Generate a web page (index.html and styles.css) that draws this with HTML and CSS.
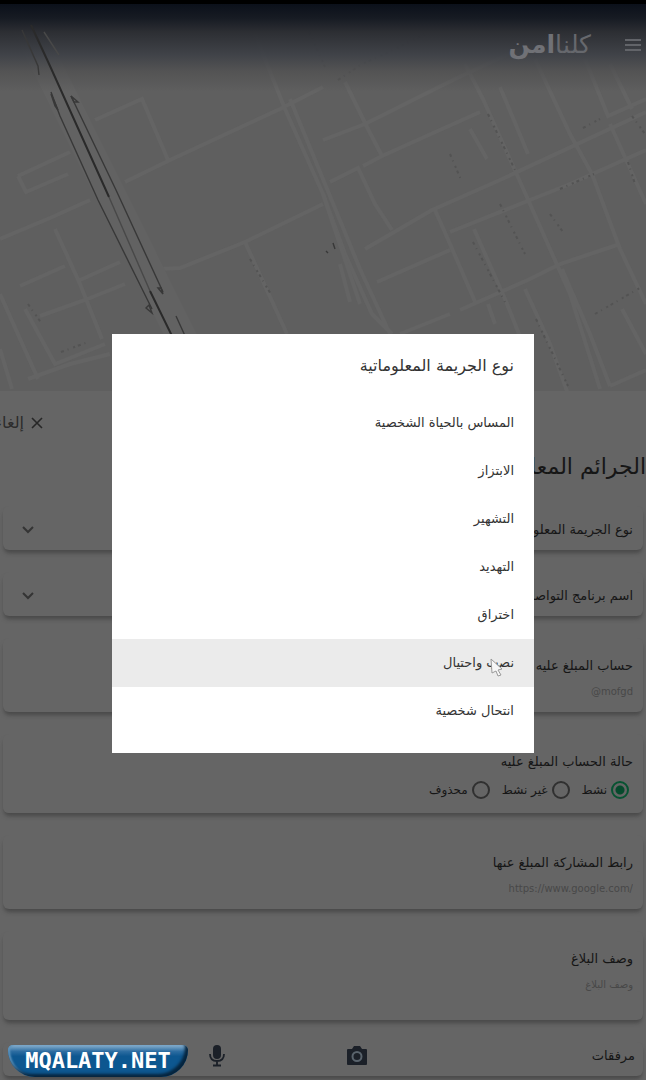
FILE: index.html
```html
<!DOCTYPE html>
<html lang="ar" dir="rtl">
<head>
<meta charset="utf-8">
<meta name="viewport" content="width=device-width, initial-scale=1">
<title>كلنا امن</title>
<link rel="stylesheet" href="styles.css">
</head>
<body>
<div class="page">
  <header class="hero">
    <svg class="map" viewBox="0 0 646 387" preserveAspectRatio="xMidYMid slice" aria-hidden="true">
      <g class="streets">
        <path d="M18 172 L70 148 M18 172 L26 188 L68 170 M95 116 L142 95 L168 156 M125 178 L170 156 L280 105 L323 83 M0 235 L50 214 L90 196 M255 30 L285 105 L323 190 L345 250 L372 310 L392 330 M290 95 L325 180 L360 265 L390 330 M55 225 L80 280 L102 335 M20 282 L65 262 M80 276 L120 258 M40 312 L85 296 L125 280 M0 290 L38 375 M0 345 L12 385 M25 305 L55 360 L105 340 M28 375 L70 360 L110 350 M160 265 L180 264 L245 238 L323 200 M245 238 L287 330"/>
        <path d="M323 136 L365 120 L455 75 L530 40 M345 78 L368 125 L382 152 L480 108 M330 178 L358 164 L375 200 L392 226 M363 162 L382 152 M365 245 L432 206 L500 176 L646 108 M377 278 L450 246 M435 206 L450 240 L476 300 M450 228 L530 196 L570 180 L646 146 M460 306 L530 275 L560 260 L620 240 M465 60 L483 95 L530 200 L570 290 L600 385 M500 83 L528 150 M535 55 L570 130 L592 170 L620 245 L646 300 M585 55 L608 112 L646 95 M610 60 L632 105 M470 125 L487 155 M474 225 L505 295 L523 340 M525 285 L550 340 L568 390 M562 265 L590 330 L610 382 M610 382 L646 366 M622 305 L646 350 M400 330 L450 310 M488 300 L495 320 M610 120 L646 200"/>
        <path d="M323 190 L360 300 M340 260 L350 298"/>
      </g>
      <path class="avenue" d="M26 20 L185 340"/>
      <path class="street-names" d="M338 76 L362 60 L385 50 L425 30 M309 28 L325 63 M488 110 L515 166 M450 150 L462 178 M500 200 L525 250 M473 238 L505 298 M536 315 L568 382 M583 124 L600 115 M560 185 L594 170 M250 255 L272 292 M595 310 L640 284 M550 210 L563 228 M61 348 L88 338 M28 300 L42 320 M628 158 L635 180 M632 112 L645 130"/>
    </svg>
    <nav class="topbar" aria-label="الرئيسية">
      <button class="icon-button" type="button" aria-label="القائمة">
        <svg width="16" height="12" viewBox="0 0 16 12"><path d="M0 1H16M0 6H16M0 11H16" stroke="#626469" stroke-width="2"/></svg>
      </button>
      <div class="brand">كلنا<b>امن</b></div>
    </nav>
    <svg class="map" viewBox="0 0 646 387" preserveAspectRatio="xMidYMid slice" aria-hidden="true">
      <g class="rails">
        <path d="M22 26 L38 62 L39 71 M51 88 L60 112 L98 196 L152 305 M71 92 L116 186 L163 288 M176 312 L186 334"/>
        <path class="main-rail" d="M31 21 L50 62 L109 193 M150 287 L173 334"/>
        <path class="thin-rail" d="M109 193 L150 287 M44 28 L59 51"/>
        <path d="M51 90 L58 106 L55 102 Z M71 92 L78 98 L74 98 Z M146 304 L152 309 L149 301 Z M158 284 L163 290 L161 284 Z M326 247 l2 2 M333 239 l2 6"/>
      </g>
    </svg>
  </header>

  <main class="report">
    <div class="report-actions">
      <button class="cancel" type="button">
        <svg width="14" height="14" viewBox="0 0 14 14" aria-hidden="true"><path d="M2 2L12 12M12 2L2 12" stroke="#272727" stroke-width="1.6"/></svg>
        <span>إلغاء</span>
      </button>
    </div>
    <h1 class="report-title">الجرائم المعلوماتية</h1>

    <form class="fields">
      <div class="card card-select">
        <select class="picker" aria-label="نوع الجريمة المعلوماتية"><option>نوع الجريمة المعلوماتية</option></select>
        <svg class="chevron" width="12" height="8" viewBox="0 0 12 8" aria-hidden="true"><path d="M1 1L6 6L11 1"/></svg>
      </div>
      <div class="card card-select">
        <select class="picker" aria-label="اسم برنامج التواصل"><option>اسم برنامج التواصل</option></select>
        <svg class="chevron" width="12" height="8" viewBox="0 0 12 8" aria-hidden="true"><path d="M1 1L6 6L11 1"/></svg>
      </div>
      <div class="card">
        <label class="label" for="account">حساب المبلغ عليه</label>
        <input class="entry" id="account" type="text" placeholder="mofgd@">
      </div>
      <fieldset class="card">
        <legend class="label">حالة الحساب المبلغ عليه</legend>
        <div class="choices">
          <label class="choice"><input type="radio" name="state" checked>نشط</label>
          <label class="choice"><input type="radio" name="state">غير نشط</label>
          <label class="choice"><input type="radio" name="state">محذوف</label>
        </div>
      </fieldset>
      <div class="card">
        <label class="label" for="link">رابط المشاركة المبلغ عنها</label>
        <input class="entry entry-link" id="link" type="url" placeholder="https://www.google.com/">
      </div>
      <div class="card card-tall">
        <label class="label" for="details">وصف البلاغ</label>
        <textarea class="entry" id="details" rows="1" placeholder="وصف البلاغ"></textarea>
      </div>
      <div class="card attachments">
        <span class="label">مرفقات</span>
        <button class="icon-button" type="button" aria-label="كاميرا">
          <svg width="22" height="22" viewBox="0 0 22 22"><path d="M2 4H6L8 1H14L16 4H20Q21 4 21 5V19Q21 20 20 20H2Q1 20 1 19V5Q1 4 2 4Z" fill="#1b2028"/><circle cx="11" cy="11.5" r="4.5" fill="#1b2028" stroke="#59636c" stroke-width="2"/></svg>
        </button>
        <button class="icon-button" type="button" aria-label="ميكروفون">
          <svg width="18" height="22" viewBox="0 0 18 22"><rect x="5" y="0" width="8" height="14" rx="4" fill="#1b2028"/><path d="M2 9Q2 16 9 16Q16 16 16 9M9 16V20M5 20.5H13" fill="none" stroke="#1b2028" stroke-width="1.8"/></svg>
        </button>
      </div>
    </form>
  </main>

  <section class="dialog" role="dialog" aria-labelledby="dialog-title">
    <h2 class="dialog-title" id="dialog-title">نوع الجريمة المعلوماتية</h2>
    <div class="options">
      <button class="option" type="button">المساس بالحياة الشخصية</button>
      <button class="option" type="button">الابتزاز</button>
      <button class="option" type="button">التشهير</button>
      <button class="option" type="button">التهديد</button>
      <button class="option" type="button">اختراق</button>
      <button class="option option-active" type="button">نصب واحتيال
        <svg class="pointer" width="15" height="20" viewBox="0 0 15 20" aria-hidden="true"><path d="M2 1L13 11L9 12L12 17L9 18L7 13L3 15Z" fill="#f6f6f6" stroke="#999" stroke-width="1"/></svg>
      </button>
      <button class="option" type="button">انتحال شخصية</button>
    </div>
  </section>

  <div class="watermark" dir="ltr">MQALATY.NET</div>
</div>
</body>
</html>
```
FILE: styles.css
```css
* { box-sizing: border-box; }

body {
  margin: 0;
  background: #656565;
  color: #161616;
  font-family: "DejaVu Sans", sans-serif;
  font-size: 13px;
  line-height: 24px;
}

button, input, select, textarea {
  margin: 0;
  padding: 0;
  border: 0;
  background: none;
  color: inherit;
  font: inherit;
}

.page {
  position: relative;
  overflow: hidden;
  border-top: 4px solid #000;
}

.hero {
  position: relative;
  height: 387px;
  background: #5f5f5f;
}

.map {
  position: absolute;
  inset: 0;
  width: 100%;
  height: 100%;
  fill: none;
  pointer-events: none;
}

.streets { stroke: #646464; stroke-width: 4; }
.avenue { stroke: #626262; stroke-width: 30; }
.rails { stroke: #383838; stroke-width: 1.4; }
.main-rail { stroke: #2a2a2a; stroke-width: 2; }
.thin-rail { stroke: #484848; }
.street-names { stroke: #535353; stroke-width: 2; stroke-dasharray: 3 4 1 5 2 3; }

.topbar {
  position: relative;
  display: flex;
  align-items: center;
  gap: 34px;
  height: 88px;
  padding: 0 5px 6px;
  background: linear-gradient(#0b101a 0, #171b23 16%, rgba(42, 44, 49, .95) 32%, rgba(61, 64, 70, .9) 58%, rgba(78, 78, 79, .7) 76%, rgba(95, 95, 95, 0) 100%);
}

.icon-button { display: grid; place-items: center; }

.brand {
  color: #66686d;
  font-size: 25px;
  font-weight: 200;
  line-height: 32px;
  white-space: nowrap;
}

.brand b { font-weight: 700; color: #707176; }

.report { padding: 20px 3px 4px; }

.report-actions {
  display: flex;
  justify-content: flex-end;
  margin-left: -3px;
}

.cancel {
  display: flex;
  align-items: center;
  gap: 6px;
  width: 44px;
  overflow: hidden;
  color: #2c2c2c;
  font-size: 16px;
  line-height: 24px;
  white-space: nowrap;
}

.cancel svg { flex: none; }

.report-title {
  margin: 16px -3px 23px;
  font-size: 22px;
  font-weight: 400;
  line-height: 32px;
}

.fields { display: grid; gap: 22px; }

.card {
  min-width: 0;
  margin: 0;
  padding: 16px 10px 10px;
  border: 0;
  border-radius: 6px;
  background: #656565;
  box-shadow: 0 4px 4px -1px #484848;
}

.card-select { display: grid; align-items: center; padding: 12px 10px 8px; }

.picker {
  grid-area: 1 / 1;
  width: 100%;
  height: 24px;
  appearance: none;
}

.chevron {
  grid-area: 1 / 1;
  justify-self: end;
  margin-left: 9px;
  fill: none;
  stroke: #343434;
  stroke-width: 2;
  pointer-events: none;
}

.label { display: block; padding: 0; white-space: nowrap; }
legend.label { float: right; width: 100%; }

.entry {
  display: block;
  width: 100%;
  height: 20px;
  margin-top: 4px;
  resize: none;
  overflow: hidden;
  font-size: 10px;
  line-height: 20px;
  text-align: right;
}

.entry::placeholder { color: #484848; opacity: 1; }
.entry-link { direction: ltr; }
.card-tall { padding-bottom: 25px; }

.choices { display: flex; gap: 12px; clear: both; padding: 4px 4px 1px; }
.choice { display: flex; align-items: center; gap: 4px; font-size: 12px; }

.choice input {
  width: 18px;
  height: 18px;
  appearance: none;
  border: 2px solid #303030;
  border-radius: 50%;
}

.choice input:checked {
  border-color: #075332;
  background: radial-gradient(circle, #074a2d 4px, transparent 5px);
}

.attachments {
  display: grid;
  grid-template-columns: 33% 23% 22% 1fr;
  align-items: center;
  padding: 2px 8px 8px;
}

.dialog {
  position: absolute;
  top: 330px;
  left: 50%;
  width: 422px;
  max-width: 90%;
  padding-bottom: 18px;
  transform: translateX(-50%);
  background: #fff;
  color: #333;
}

.dialog-title {
  margin: 0;
  padding: 20px 20px 21px;
  font-size: 16px;
  font-weight: 400;
  line-height: 24px;
}

.options { display: grid; }

.option {
  position: relative;
  padding: 12px 20px;
  text-align: right;
  line-height: 24px;
}

.option-active { background: #ebebeb; }
.pointer { position: absolute; top: 19px; right: 30px; }

.watermark {
  position: absolute;
  bottom: 3px;
  left: 8px;
  width: 180px;
  border-radius: 5px 5px 27px 27px;
  background: linear-gradient(#8bb2d0, #2d6da1 20%, #0d5790 35%, #0d5790);
  box-shadow: inset -3px -3px 3px #06243d, inset 2px 0 2px #5d94bd;
  color: #fff;
  font: bold 22px/32px "DejaVu Sans Mono", monospace;
  text-align: center;
}
```
